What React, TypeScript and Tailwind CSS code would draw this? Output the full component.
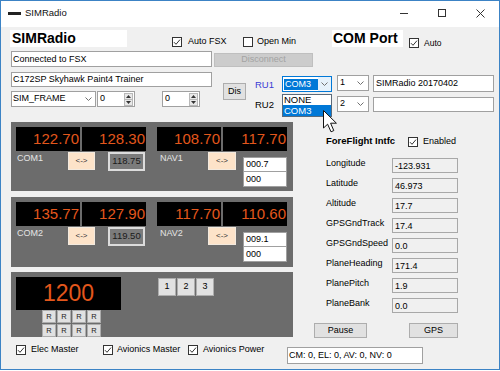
import React from "react";

const ORANGE = "text-[#e4571c]";

function Check({ checked = true }: { checked?: boolean }) {
  return (
    <div className="w-[10px] h-[10px] border border-[#333333] bg-white flex items-center justify-center shrink-0">
      {checked && (
        <svg width="8" height="8" viewBox="0 0 8 8">
          <path d="M1 4.2 L3 6.3 L7 1.6" fill="none" stroke="#333" strokeWidth="1" />
        </svg>
      )}
    </div>
  );
}

function Chevron() {
  return (
    <svg width="7" height="4" viewBox="0 0 7 4" className="shrink-0">
      <path d="M0.5 0.5 L3.5 3.5 L6.5 0.5" fill="none" stroke="#707070" strokeWidth="1" />
    </svg>
  );
}

function Spin() {
  return (
    <div className="w-[9px] h-[13px] border border-[#b8b8b8] bg-[#e8e8e8] flex flex-col shrink-0">
      <div className="flex-1 flex items-center justify-center border-b border-[#b8b8b8]">
        <svg width="5" height="3" viewBox="0 0 5 3">
          <path d="M0 3 L2.5 0 L5 3 Z" fill="#333" />
        </svg>
      </div>
      <div className="flex-1 flex items-center justify-center">
        <svg width="5" height="3" viewBox="0 0 5 3">
          <path d="M0 0 L2.5 3 L5 0 Z" fill="#333" />
        </svg>
      </div>
    </div>
  );
}

function Disp({ v }: { v: string }) {
  return (
    <div className={`w-[64px] h-[24px] bg-black text-right pr-[1px] text-[15px] leading-[24px] ${ORANGE}`}>{v}</div>
  );
}

function Swap({ cls }: { cls: string }) {
  return (
    <div className={`h-[18px] bg-[#fde3c9] border border-[#f3eadf] flex items-center justify-center text-[8px] text-[#333] ${cls}`}>
      &lt;-&gt;
    </div>
  );
}

function ComHalf({ a, b, label, sb }: { a: string; b: string; label: string; sb: string }) {
  return (
    <div className="w-[141px] pt-[5px] pl-[5px]">
      <div className="flex gap-[2px]">
        <Disp v={a} />
        <Disp v={b} />
      </div>
      <div className="flex">
        <span className="ml-[1px] mt-[2px] w-[51px] text-[#e4e4e4] leading-[11px]">{label}</span>
        <Swap cls="mt-[1px] w-[27px]" />
        <div className="ml-[13px] mt-[1px] w-[37px] h-[19px] bg-[#7b7b7b] border-2 border-[#dcdcdc] flex items-center justify-center text-[9.5px] text-[#1a1a1a]">
          {sb}
        </div>
      </div>
    </div>
  );
}

function NavHalf({ a, b, label, t1, t2 }: { a: string; b: string; label: string; t1: string; t2: string }) {
  return (
    <div className="w-[141px] pt-[5px] pl-[5px]">
      <div className="flex gap-[2px]">
        <Disp v={a} />
        <Disp v={b} />
      </div>
      <div className="flex">
        <span className="ml-[3px] mt-[2px] w-[48px] text-[#e4e4e4] leading-[11px]">{label}</span>
        <Swap cls="mt-[1px] w-[28px]" />
        <div className="ml-[7px] mt-[6px] flex flex-col">
          <div className="w-[44px] h-[15px] bg-white border border-[#a0a0a0] pl-[2px] leading-[13px]">{t1}</div>
          <div className="w-[44px] h-[15px] bg-white border border-[#a0a0a0] border-t-0 pl-[2px] leading-[14px]">{t2}</div>
        </div>
      </div>
    </div>
  );
}

const rows: [string, string][] = [
  ["Longitude", "-123.931"],
  ["Latitude", "46.973"],
  ["Altitude", "17.7"],
  ["GPSGndTrack", "17.4"],
  ["GPSGndSpeed", "0.0"],
  ["PlaneHeading", "171.4"],
  ["PlanePitch", "1.9"],
  ["PlaneBank", "0.0"],
];

export default function App() {
  return (
    <div className="w-[500px] h-[371px] bg-white font-['Liberation_Sans',Arial,sans-serif] text-[9px] text-black">
      <div className="relative w-[500px] h-[370px] border border-[#3c83c5] bg-[#f0f0f0] flex flex-col overflow-hidden">
        {/* Title bar */}
        <div className="h-[26px] bg-white flex items-center pb-[2px] shrink-0">
          <div className="ml-[7px] w-[13px] h-[3px] bg-[#222222]" />
          <span className="ml-[4px] text-[9.5px] text-[#111111]">SIMRadio</span>
          <div className="ml-auto flex items-center h-full">
            <div className="w-[38px] h-full flex items-center justify-center">
              <div className="w-[8px] h-[1px] bg-[#333]" />
            </div>
            <div className="w-[38px] h-full flex items-center justify-center">
              <div className="w-[8px] h-[8px] border border-[#333]" />
            </div>
            <div className="w-[38px] h-full flex items-center justify-center">
              <svg width="9" height="9" viewBox="0 0 9 9">
                <path d="M0.5 0.5 L8.5 8.5 M8.5 0.5 L0.5 8.5" stroke="#333" strokeWidth="1" />
              </svg>
            </div>
          </div>
        </div>

        {/* Row 1 */}
        <div className="flex mt-[3px] h-[17px] pl-[9px] shrink-0">
          <div className="w-[117px] h-[17px] bg-white font-bold text-[14px] leading-[17px] pl-[2px]">SIMRadio</div>
          <div className="ml-[45px] w-[71px] flex items-center gap-[6px] mt-[7px] h-[10px]">
            <Check />
            <span>Auto FSX</span>
          </div>
          <div className="w-[89px] flex items-center gap-[4px] mt-[7px] h-[10px]">
            <Check checked={false} />
            <span>Open Min</span>
          </div>
          <div className="w-[71px] h-[17px] bg-white font-bold text-[14px] leading-[17px] pl-[1px]">COM Port</div>
          <div className="ml-[6px] flex items-center gap-[5px] mt-[8px] h-[10px]">
            <Check />
            <span className="text-[8.5px]">Auto</span>
          </div>
        </div>

        {/* Row 2 */}
        <div className="flex mt-[4px] h-[16px] pl-[10px] shrink-0">
          <div className="w-[201px] h-[16px] bg-white border border-[#a0a0a0] pl-[1px] leading-[14px]">Connected to FSX</div>
          <div className="ml-[2px] mt-[2px] w-[99px] h-[14px] bg-[#cccccc] border border-[#bfbfbf] text-[#a3a3a3] flex items-center justify-center">
            Disconnect
          </div>
        </div>

        {/* Rows 3-4 */}
        <div className="flex mt-[5px] h-[40px] pl-[10px] shrink-0">
          <div className="w-[201px] flex flex-col">
            <div className="h-[15px] bg-white border border-[#a0a0a0] pl-[1px] leading-[13px]">C172SP Skyhawk Paint4 Trainer</div>
            <div className="flex mt-[4px]">
              <div className="w-[85px] h-[16px] bg-white border border-[#a0a0a0] flex items-center pl-[1px] pr-[3px] justify-between">
                <span>SIM_FRAME</span>
                <Chevron />
              </div>
              <div className="ml-[1px] w-[38px] h-[16px] bg-white border border-[#a0a0a0] flex items-center justify-between pl-[2px] pr-[1px]">
                <span>0</span>
                <Spin />
              </div>
              <div className="ml-[27px] w-[38px] h-[16px] bg-white border border-[#a0a0a0] flex items-center justify-between pl-[2px] pr-[1px]">
                <span>0</span>
                <Spin />
              </div>
            </div>
          </div>
          <div className="ml-[11px] mt-[11px] w-[23px] h-[17px] bg-[#e1e1e1] border border-[#adadad] flex items-center justify-center">
            Dis
          </div>
          <div className="ml-[9px] w-[27px] flex flex-col text-[9.5px] leading-[11px]">
            <span className="mt-[7px] text-[#3b3bd4]">RU1</span>
            <span className="mt-[9px]">RU2</span>
          </div>
          <div className="w-[50px] flex flex-col">
            <div className="relative mt-[4px] h-[17px] bg-white border border-[#0078d7] flex items-center">
              <div className="ml-[1px] h-[11px] w-[34px] bg-[#0078d7] text-white leading-[11px] pl-[1px]">COM3</div>
              <div className="ml-auto h-full w-[13px] bg-[#e5f1fb] flex items-center justify-center">
                <Chevron />
              </div>
              <div className="absolute left-[-1px] top-[17px] w-[50px] h-[23px] bg-white border border-[#5a6a7a] z-10 flex flex-col text-[9.5px] leading-[10px]">
                <div className="h-[10px] pl-[1px]">NONE</div>
                <div className="h-[11px] bg-[#0078d7] text-white pl-[1px] leading-[11px]">COM3</div>
              </div>
            </div>
            <div className="mt-[4px] h-[16px] bg-white border border-[#a0a0a0]" />
          </div>
          <div className="ml-[5px] w-[32px] flex flex-col">
            <div className="mt-[3px] h-[17px] bg-white border border-[#a0a0a0] flex items-center justify-between pl-[2px] pr-[4px]">
              <span>1</span>
              <Chevron />
            </div>
            <div className="mt-[5px] h-[16px] bg-white border border-[#a0a0a0] flex items-center justify-between pl-[2px] pr-[4px]">
              <span>2</span>
              <Chevron />
            </div>
          </div>
          <div className="ml-[4px] w-[121px] flex flex-col">
            <div className="mt-[3px] h-[17px] bg-white border border-[#a0a0a0] pl-[2px] leading-[15px]">SIMRadio 20170402</div>
            <div className="mt-[5px] h-[16px] bg-white border border-[#a0a0a0]" />
          </div>
        </div>

        {/* Middle */}
        <div className="flex mt-[10px] pl-[10px] shrink-0">
          <div className="w-[282px] flex flex-col">
            <div className="h-[69px] bg-[#6c6c6c] flex">
              <ComHalf a="122.70" b="128.30" label="COM1" sb="118.75" />
              <NavHalf a="108.70" b="117.70" label="NAV1" t1="000.7" t2="000" />
            </div>
            <div className="mt-[6px] h-[70px] bg-[#6c6c6c] flex">
              <ComHalf a="135.77" b="127.90" label="COM2" sb="119.50" />
              <NavHalf a="117.70" b="110.60" label="NAV2" t1="009.1" t2="000" />
            </div>
            <div className="mt-[5px] h-[65px] bg-[#6c6c6c] flex pt-[5px] pl-[5px]">
              <div className="flex flex-col">
                <div className={`w-[105px] h-[33px] bg-black text-center text-[23px] leading-[33px] ${ORANGE}`}>1200</div>
                <div className="ml-[26px] grid grid-cols-4 gap-[1px] w-max">
                  {Array.from({ length: 8 }).map((_, i) => (
                    <div
                      key={i}
                      className="w-[14px] h-[13px] bg-[#e1e1e1] border border-[#adadad] flex items-center justify-center text-[7.5px] text-[#222]"
                    >
                      R
                    </div>
                  ))}
                </div>
              </div>
              <div className="ml-[37px] mt-[1px] flex gap-[1px] h-[18px]">
                {["1", "2", "3"].map((n) => (
                  <div
                    key={n}
                    className="w-[18px] h-[18px] bg-[#e1e1e1] border border-[#adadad] flex items-center justify-center text-[9px]"
                  >
                    {n}
                  </div>
                ))}
              </div>
            </div>
          </div>

          {/* Right column */}
          <div className="flex flex-col">
            <div className="flex ml-[33px] mt-[13px] h-[13px] items-center">
              <span className="w-[82px] font-bold text-[9.5px]">ForeFlight Intfc</span>
              <Check />
              <span className="ml-[5px]">Enabled</span>
            </div>
            {rows.map(([k, v], i) => (
              <div key={k} className={i === 0 ? "flex ml-[33px] mt-[10px] h-[15px]" : "flex ml-[33px] mt-[5px] h-[15px]"}>
                <span className="w-[66px] leading-[11px]">{k}</span>
                <div className="w-[66px] h-[15px] bg-[#f0f0f0] border border-[#a8a8a8] pl-[2px] leading-[14px]">{v}</div>
              </div>
            ))}
            <div className="flex mt-[10px] h-[15px]">
              <div className="ml-[21px] w-[53px] h-[15px] bg-[#e1e1e1] border border-[#adadad] flex items-center justify-center">
                Pause
              </div>
              <div className="ml-[42px] w-[49px] h-[15px] bg-[#e1e1e1] border border-[#adadad] flex items-center justify-center">
                GPS
              </div>
            </div>
          </div>
        </div>

        {/* Bottom row */}
        <div className="flex mt-[7px] pl-[15px] shrink-0">
          <div className="w-[87px] flex items-center gap-[5px] h-[10px]">
            <Check />
            <span>Elec Master</span>
          </div>
          <div className="w-[85px] flex items-center gap-[4px] h-[10px]">
            <Check />
            <span>Avionics Master</span>
          </div>
          <div className="w-[99px] flex items-center gap-[5px] h-[10px]">
            <Check />
            <span>Avionics Power</span>
          </div>
          <div className="mt-[2px] w-[136px] h-[17px] bg-white border border-[#a0a0a0] pl-[1px] leading-[15px]">
            CM: 0, EL: 0, AV: 0, NV: 0
          </div>
        </div>

        {/* Mouse cursor */}
        <svg className="absolute left-[322px] top-[109px] z-20" width="15" height="23" viewBox="0 0 15 23">
          <path
            d="M0.5 0.5 L0.5 18 L4.6 14.2 L8 21.8 L10.8 20.6 L7.6 13.2 L13.4 13.2 Z"
            fill="white"
            stroke="#111"
            strokeWidth="1"
            strokeLinejoin="round"
          />
        </svg>
      </div>
    </div>
  );
}
